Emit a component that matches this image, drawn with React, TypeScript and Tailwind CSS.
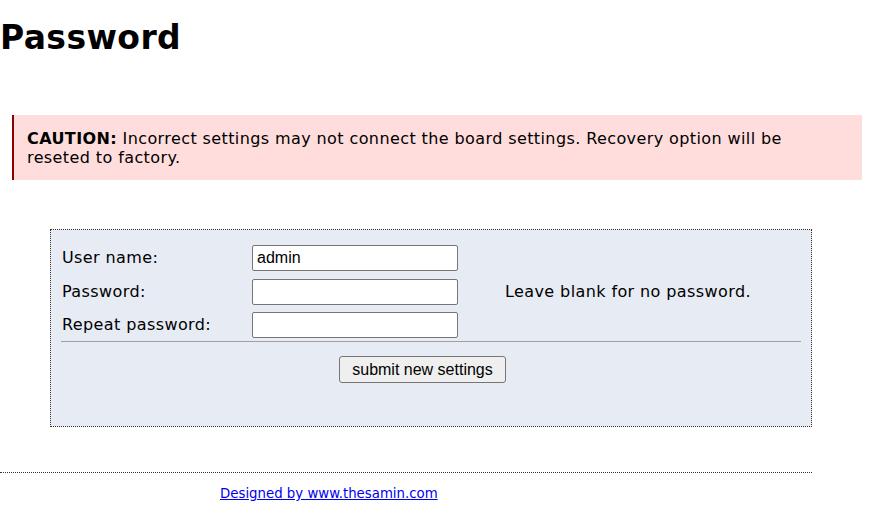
import React from "react";

export default function App() {
  return (
    <div className="min-h-[518px] bg-white text-black font-['DejaVu_Sans',Verdana,sans-serif] tracking-[0.4px]">
      {/* Titre */}
      <h1 className="m-0 pt-[18px] text-[33px] font-bold leading-[normal]">Password</h1>

      {/* Avertissement */}
      <div className="mt-[58px] ml-[12px] w-[850px] border-l-2 border-[#8b0000] bg-[#ffdddd] pl-[13px] pr-[24px] pt-[14px] pb-[13px] text-[16px] leading-[19px]">
        <b>CAUTION:</b> Incorrect settings may not connect the board settings. Recovery option will be
        reseted to factory.
      </div>

      {/* Formulaire */}
      <div className="mt-[49px] ml-[50px] w-[762px] h-[198px] border border-dotted border-[#333] bg-[#e7ebf4] px-[10px] pt-[15px]">
        <div className="grid grid-cols-[191px_206px_auto] auto-rows-[26px] gap-y-[7.5px] items-center text-[16px]">
          <span className="pl-px">User name:</span>
          <input
            defaultValue="admin"
            className="h-[26px] w-[206px] rounded-[2px] border border-[#767676] bg-white px-[4px] text-[16px] tracking-normal font-['Liberation_Sans',Arial,sans-serif] outline-none"
          />
          <span />
          <span className="pl-px">Password:</span>
          <input
            type="password"
            className="h-[26px] w-[206px] rounded-[2px] border border-[#767676] bg-white px-[4px] text-[16px] tracking-normal font-['Liberation_Sans',Arial,sans-serif] outline-none"
          />
          <span className="pl-[47px]">Leave blank for no password.</span>
          <span className="pl-px">Repeat password:</span>
          <input
            type="password"
            className="h-[26px] w-[206px] rounded-[2px] border border-[#767676] bg-white px-[4px] text-[16px] tracking-normal font-['Liberation_Sans',Arial,sans-serif] outline-none"
          />
          <span />
        </div>
        <div className="mt-[3px] border-t border-[#a0a0a0]" />
        <button className="mt-[14px] ml-[278px] h-[27px] w-[167px] rounded-[3px] border border-[#767676] bg-[#efefef] text-[16px] tracking-normal font-['Liberation_Sans',Arial,sans-serif] text-black">
          submit new settings
        </button>
      </div>

      {/* Pied de page */}
      <div className="mt-[45px] w-[812px] border-t border-dotted border-[#333]" />
      <div className="pl-[220px] pt-[10px] leading-[normal]">
        <a href="#" className="text-[14.8px] tracking-normal text-[#0000ee] underline font-['DejaVu_Sans_Condensed','DejaVu_Sans',sans-serif]">
          Designed by www.thesamin.com
        </a>
      </div>
    </div>
  );
}
